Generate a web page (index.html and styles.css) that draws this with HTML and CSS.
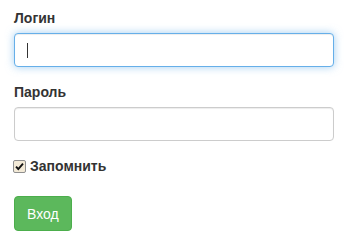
FILE: index.html
```html
<!DOCTYPE html>
<html lang="ru">

<head>
    <meta charset="UTF-8">
    <meta name="viewport" content="width=device-width, initial-scale=1.0">
    <title>Вход</title>
    <link rel="stylesheet" href="styles.css">
</head>

<body>
    <form class="login">
        <div class="form-group">
            <label for="login">Логин</label>
            <div class="field">
                <input type="text" id="login" class="form-control focus">
                <span class="caret"></span>
            </div>
        </div>
        <div class="form-group">
            <label for="pass">Пароль</label>
            <input type="password" id="pass" class="form-control">
        </div>
        <div class="checkbox">
            <label>
                <span class="check">
                    <svg width="13" height="13" viewBox="0 0 13 13">
                        <rect x="0.5" y="0.5" width="12" height="12" rx="1.5" fill="#f3ead7" stroke="#8f8f8f"/>
                        <path d="M3 6.6 L5.3 9 L10 3.6" fill="none" stroke="#111" stroke-width="1.9"/>
                    </svg>
                </span>
                Запомнить
            </label>
        </div>
        <button type="button" class="btn">Вход</button>
    </form>
</body>

</html>
```

FILE: styles.css
```css
body {
    margin: 0;
    font-family: "Liberation Sans", Arial, sans-serif;
    font-size: 14px;
    line-height: 20px;
    color: #333;
    background: #fff;
}

.login {
    width: 320px;
    padding: 8px 14px;
}

.form-group {
    margin-bottom: 15px;
}

.form-group>label {
    display: block;
    margin-bottom: 5px;
    font-weight: bold;
}

.field {
    position: relative;
}

.caret {
    position: absolute;
    left: 13px;
    top: 10px;
    width: 1px;
    height: 15px;
    background: #333;
}

.form-control {
    display: block;
    box-sizing: border-box;
    width: 100%;
    height: 34px;
    margin: 0;
    padding: 6px 12px;
    font: inherit;
    color: #555;
    background: #fff;
    border: 1px solid #ccc;
    border-radius: 4px;
    box-shadow: inset 0 1px 1px rgba(0, 0, 0, .075);
    outline: none;
}

.form-control.focus,
.form-control:focus {
    border-color: #66afe9;
    box-shadow: inset 0 1px 1px rgba(0, 0, 0, .075), 0 0 8px rgba(102, 175, 233, .6);
}

.checkbox {
    margin: 1px 0 20px;
}

.checkbox>label {
    display: flex;
    align-items: center;
    gap: 4px;
    font-weight: bold;
    margin-left: -1px;
}

.check {
    display: flex;
    width: 13px;
    height: 13px;
}

.btn {
    display: block;
    height: 35px;
    padding: 6px 12px;
    font: inherit;
    color: #fff;
    background: #5cb85c;
    border: 1px solid #4cae4c;
    border-radius: 4px;
}
```
